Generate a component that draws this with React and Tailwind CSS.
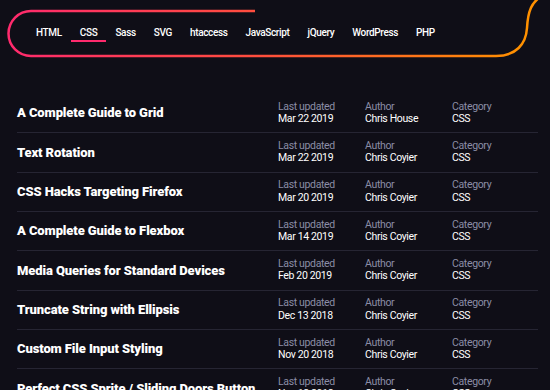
import React from 'react';

const navItems = ['HTML', 'CSS', 'Sass', 'SVG', 'htaccess', 'JavaScript', 'jQuery', 'WordPress', 'PHP'];

const snippets = [
  { title: 'A Complete Guide to Grid', updated: 'Mar 22 2019', author: 'Chris House' },
  { title: 'Text Rotation', updated: 'Mar 22 2019', author: 'Chris Coyier' },
  { title: 'CSS Hacks Targeting Firefox', updated: 'Mar 20 2019', author: 'Chris Coyier' },
  { title: 'A Complete Guide to Flexbox', updated: 'Mar 14 2019', author: 'Chris Coyier' },
  { title: 'Media Queries for Standard Devices', updated: 'Feb 20 2019', author: 'Chris Coyier' },
  { title: 'Truncate String with Ellipsis', updated: 'Dec 13 2018', author: 'Chris Coyier' },
  { title: 'Custom File Input Styling', updated: 'Nov 20 2018', author: 'Chris Coyier' },
  { title: 'Perfect CSS Sprite / Sliding Doors Button', updated: 'Nov 12 2018', author: 'Chris Coyier' },
];

// Gradient outline that wraps the nav
const NavOutline = () => (
  <svg className="absolute left-0 top-0 pointer-events-none" width="550" height="70" viewBox="0 0 550 70" fill="none">
    <defs>
      <linearGradient id="navGrad" gradientUnits="userSpaceOnUse" x1="10" y1="0" x2="520" y2="0">
        <stop offset="0" stopColor="#ff2a6d" />
        <stop offset="0.5" stopColor="#ff4f3c" />
        <stop offset="1" stopColor="#ff9000" />
      </linearGradient>
    </defs>
    <path
      d="M255 11 L31 11 A22.5 22.5 0 0 0 31 56 L496 56 C516 56 526 44 527 28 C528 10 532 3 540 -3"
      stroke="url(#navGrad)"
      strokeWidth="2.5"
      strokeLinecap="butt"
    />
  </svg>
);

const Meta = ({ label, value }) => (
  <div className="flex flex-col text-[10.5px] leading-[12.5px] tracking-[-0.35px]">
    <span className="text-[#8b8da6]">{label}</span>
    <span className="text-white">{value}</span>
  </div>
);

const App = () => {
  return (
    <div className="h-[390px] overflow-hidden bg-[#0f0e17]" style={{ fontFamily: 'Roboto, "Open Sans", sans-serif' }}>
      <header className="relative h-[94px]">
        <NavOutline />
        <nav className="relative flex pl-[27px] pt-[26px]">
          {navItems.map((item) => (
            <a
              key={item}
              className={`px-[9px] text-[10px] leading-[14px] font-medium tracking-[-0.35px] text-white border-b-2 ${
                item === 'CSS' ? 'border-[#ff2a6d]' : 'border-transparent'
              }`}
            >
              {item}
            </a>
          ))}
        </nav>
      </header>

      <ul className="ml-[17px] mr-[12px]">
        {snippets.map((s) => (
          <li
            key={s.title}
            className="grid grid-cols-[261px_87px_87px_1fr] items-center h-[39.33px] border-b border-[#262533]"
          >
            <h3 className="text-[13px] font-black text-white tracking-[-0.1px] whitespace-nowrap">
              {s.title}
            </h3>
            <Meta label="Last updated" value={s.updated} />
            <Meta label="Author" value={s.author} />
            <Meta label="Category" value="CSS" />
          </li>
        ))}
      </ul>
    </div>
  );
};

export default App;
